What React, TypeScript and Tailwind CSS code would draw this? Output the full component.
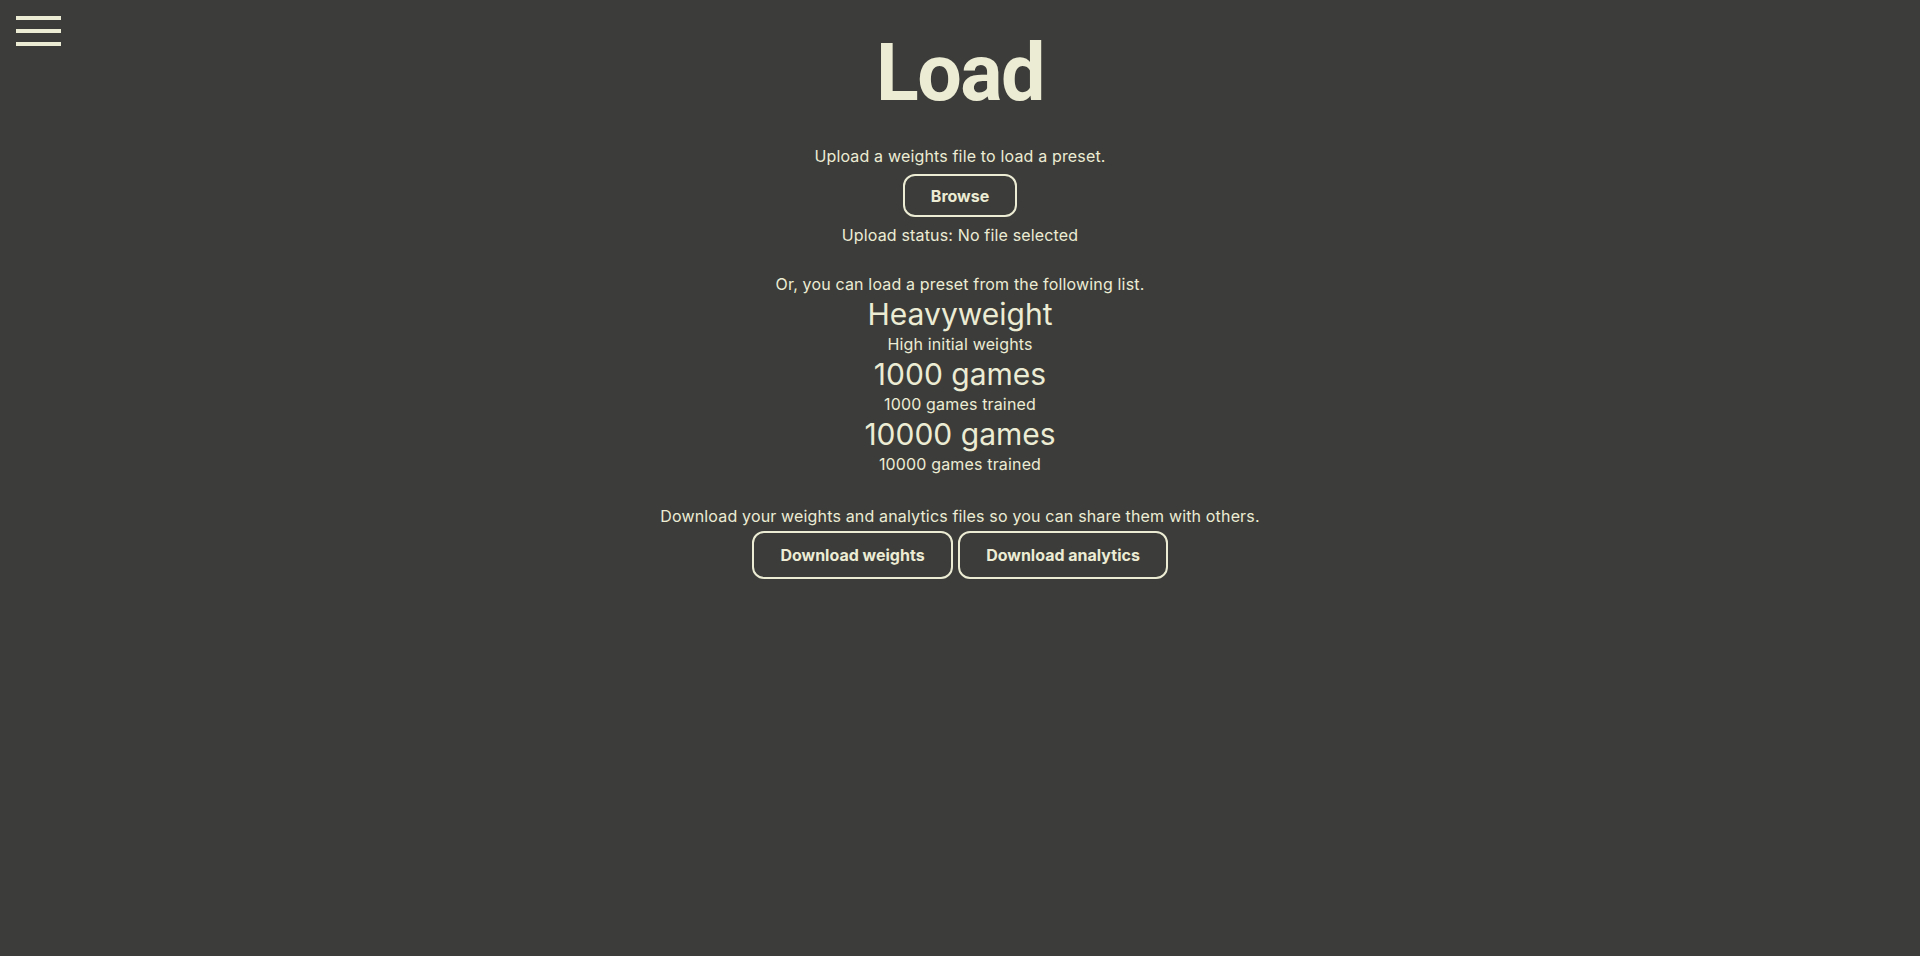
import type { FC } from 'react';

const presets = [
  { name: 'Heavyweight', description: 'High initial weights' },
  { name: '1000 games', description: '1000 games trained' },
  { name: '10000 games', description: '10000 games trained' },
];

const btn =
  'inline-flex items-center justify-center rounded-[12px] border-2 border-[#ececd4] bg-transparent px-[22px] font-bold text-[16px] text-[#ececd4]';

const App: FC = () => {
  return (
    <div className="min-h-[956px] w-full bg-[#3c3c3a] text-[#ececd4] font-['Inter',sans-serif]">
      <button className="absolute left-[16px] top-[16px] flex flex-col gap-[9px]" aria-label="Menu">
        <span className="block h-[4px] w-[45px] bg-[#ececd4]" />
        <span className="block h-[4px] w-[45px] bg-[#ececd4]" />
        <span className="block h-[4px] w-[45px] bg-[#ececd4]" />
      </button>

      <main className="flex flex-col items-center text-center">
        <h1 className="mt-[37px] text-[79px] leading-[72px] font-bold tracking-[-0.02em] font-['Roboto',sans-serif]">
          Load
        </h1>

        <p className="mt-[35px] text-[16px] leading-[24px] tracking-[0.01em]">Upload a weights file to load a preset.</p>
        <button className={`${btn} mt-[6px] h-[43px] min-w-[114px]`}>Browse</button>
        <p className="mt-[6px] text-[16px] leading-[24px] tracking-[0.01em]">Upload status: No file selected</p>

        <p className="mt-[25px] text-[16px] leading-[24px] tracking-[0.01em]">
          Or, you can load a preset from the following list.
        </p>
        <ul className="flex flex-col items-center">
          {presets.map((p) => (
            <li key={p.name} className="flex flex-col items-center cursor-pointer">
              <span className="text-[30px] leading-[36px]">{p.name}</span>
              <span className="text-[16px] leading-[24px] tracking-[0.01em]">{p.description}</span>
            </li>
          ))}
        </ul>

        <p className="mt-[28px] text-[16px] leading-[24px] tracking-[0.01em]">
          Download your weights and analytics files so you can share them with others.
        </p>
        <div className="mt-[3px] flex gap-[5px]">
          <button className={`${btn} h-[48px] min-w-[201px]`}>Download weights</button>
          <button className={`${btn} h-[48px] min-w-[210px]`}>Download analytics</button>
        </div>
      </main>
    </div>
  );
};

export default App;
